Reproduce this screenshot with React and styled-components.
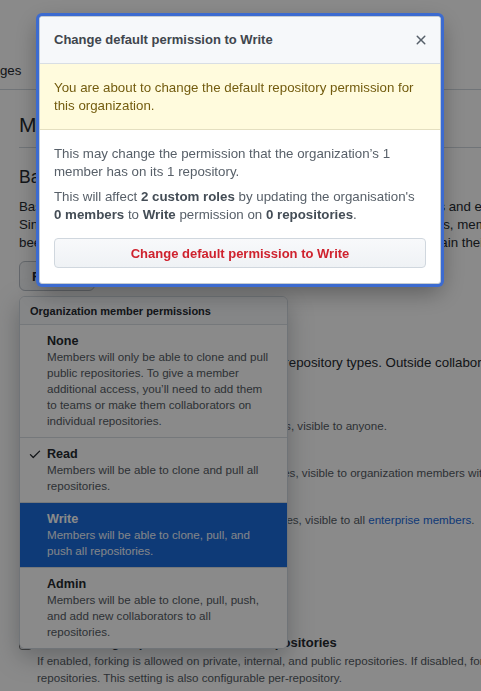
import React from 'react';
import styled, { createGlobalStyle } from 'styled-components';

const GlobalStyle = createGlobalStyle`
  html, body {
    margin: 0;
    padding: 0;
    overflow: hidden;
    background: #ffffff;
  }
  body {
    font-family: "Liberation Sans", Arial, sans-serif;
  }
`;

const permissions = [
  {
    name: 'None',
    text: 'Members will only be able to clone and pull public repositories. To give a member additional access, you\u2019ll need to add them to teams or make them collaborators on individual repositories.',
  },
  { name: 'Read', text: 'Members will be able to clone and pull all repositories.', checked: true },
  { name: 'Write', text: 'Members will be able to clone, pull, and push all repositories.', selected: true },
  { name: 'Admin', text: 'Members will be able to clone, pull, push, and add new collaborators to all repositories.' },
];

const creationOptions = [
  { label: 'Public', before: 'Members will be able to create public repositories, visible to anyone.' },
  {
    label: 'Private',
    before: 'Members will be able to create private repositories, visible to organization members with permission.',
  },
  {
    label: 'Internal',
    before: 'Members will be able to create internal repositories, visible to all ',
    link: 'enterprise members',
    after: '.',
  },
];

function CheckIcon() {
  return (
    <svg width="14" height="14" viewBox="0 0 16 16" fill="currentColor">
      <path d="M13.78 4.22a.75.75 0 0 1 0 1.06l-7.25 7.25a.75.75 0 0 1-1.06 0L2.22 9.28a.751.751 0 0 1 .018-1.042.751.751 0 0 1 1.042-.018L6 10.94l6.72-6.72a.75.75 0 0 1 1.06 0Z" />
    </svg>
  );
}

function XIcon() {
  return (
    <svg width="16" height="16" viewBox="0 0 16 16" fill="currentColor">
      <path d="M3.72 3.72a.75.75 0 0 1 1.06 0L8 6.94l3.22-3.22a.749.749 0 0 1 1.275.326.749.749 0 0 1-.215.734L9.06 8l3.22 3.22a.749.749 0 0 1-.326 1.275.749.749 0 0 1-.734-.215L8 9.06l-3.22 3.22a.751.751 0 0 1-1.042-.018.751.751 0 0 1-.018-1.042L6.94 8 3.72 4.78a.75.75 0 0 1 0-1.06Z" />
    </svg>
  );
}

function Caret() {
  return (
    <svg width="16" height="16" viewBox="0 0 16 16" fill="currentColor">
      <path d="m4.427 7.427 3.396 3.396a.25.25 0 0 0 .354 0l3.396-3.396A.25.25 0 0 0 11.396 7H4.604a.25.25 0 0 0-.177.427Z" />
    </svg>
  );
}

function PermissionMenu() {
  return (
    <Menu>
      <MenuHeader>Organization member permissions</MenuHeader>
      {permissions.map((p) => (
        <MenuItem key={p.name} $selected={p.selected}>
          <CheckSlot>{p.checked && <CheckIcon />}</CheckSlot>
          <ItemBody>
            <ItemTitle>{p.name}</ItemTitle>
            <ItemDesc $selected={p.selected}>{p.text}</ItemDesc>
          </ItemBody>
        </MenuItem>
      ))}
    </Menu>
  );
}

function ConfirmDialog() {
  return (
    <Dialog role="dialog">
      <DialogHeader>
        <DialogTitle>Change default permission to Write</DialogTitle>
        <CloseButton aria-label="Close">
          <XIcon />
        </CloseButton>
      </DialogHeader>
      <Flash>You are about to change the default repository permission for this organization.</Flash>
      <DialogBody>
        <BodyText>This may change the permission that the organization’s 1 member has on its 1 repository.</BodyText>
        <BodyText>
          This will affect <Strong>2 custom roles</Strong> by updating the organisation's{' '}
          <Strong>0 members</Strong> to <Strong>Write</Strong> permission on <Strong>0 repositories</Strong>.
        </BodyText>
        <DangerButton>Change default permission to Write</DangerButton>
      </DialogBody>
    </Dialog>
  );
}

export default function App() {
  return (
    <>
      <GlobalStyle />
      <Page>
        <TopNav>
          <NavItem>Packages</NavItem>
        </TopNav>
        <Main>
          <Subhead>Member privileges</Subhead>
          <SectionTitle>Base permissions</SectionTitle>
          <Para>
            Base permissions to the organization's repositories apply to all members and excludes outside
            collaborators. Since organization members can have permissions from multiple sources, members and
            collaborators who have been granted a higher level of access than the base permissions will retain
            their higher access privileges.
          </Para>
          <MenuWrap>
            <SelectButton>
              Read <Caret />
            </SelectButton>
            <PermissionMenu />
          </MenuWrap>

          <SectionTitle $top={32}>Repository creation</SectionTitle>
          <Para $top={7}>
            Members will be able to create only selected repository types. Outside collaborators cannot.
          </Para>
          <OptionList>
            {creationOptions.map((o) => (
              <OptionRow key={o.label}>
                <Checkbox $checked />
                <OptionBody>
                  <OptionLabel>{o.label}</OptionLabel>
                  <OptionNote>
                    {o.before}
                    {o.link && <Link>{o.link}</Link>}
                    {o.after}
                  </OptionNote>
                </OptionBody>
              </OptionRow>
            ))}
          </OptionList>

          <SectionTitle $top={60}>Repository forking</SectionTitle>
          <ForkOption>
            <Checkbox />
            <OptionBody>
              <OptionLabel>Allow forking of private and internal repositories</OptionLabel>
              <OptionNote>
                If enabled, forking is allowed on private, internal, and public repositories. If disabled, forking
                is only allowed on public repositories. This setting is also configurable per-repository.
              </OptionNote>
            </OptionBody>
          </ForkOption>
        </Main>
        <Backdrop />
        <ConfirmDialog />
      </Page>
    </>
  );
}

const Page = styled.div`
  position: relative;
  width: 100vw;
  height: 100vh;
  overflow: hidden;
  background: #ffffff;
  color: #24292f;
  font-size: 13.3px;
  line-height: 18px;
`;

const TopNav = styled.nav`
  height: 90px;
  box-sizing: border-box;
  display: flex;
  align-items: flex-end;
  padding-bottom: 9px;
  border-bottom: 1px solid #d0d7de;
  width: 720px;
`;

const NavItem = styled.span`
  margin-left: -37px;
`;

const Main = styled.main`
  width: 666px;
  padding-left: 19px;
`;

const Subhead = styled.h2`
  margin: 21px 0 0;
  padding-bottom: 8px;
  font-size: 21px;
  line-height: 28px;
  font-weight: 400;
  border-bottom: 1px solid #d0d7de;
`;

const SectionTitle = styled.h3`
  margin: ${(p) => p.$top || 17}px 0 0;
  font-size: 17.5px;
  line-height: 24px;
  font-weight: 400;
`;

const Para = styled.p`
  margin: ${(p) => p.$top || 9}px 0 0;
`;

const MenuWrap = styled.div`
  position: relative;
  margin-top: 9px;
  width: 269px;
`;

const SelectButton = styled.button`
  display: flex;
  align-items: center;
  gap: 3px;
  height: 30px;
  box-sizing: border-box;
  padding: 0 10px 0 12px;
  border: 1px solid #b9c0c8;
  border-radius: 6px;
  background: #f3f5f7;
  color: #24292f;
  font-family: inherit;
  font-size: 13.3px;
  font-weight: 700;
`;

const Menu = styled.div`
  position: absolute;
  top: calc(100% + 5px);
  left: 0;
  width: 269px;
  box-sizing: border-box;
  background: #ffffff;
  border: 1px solid #d0d7de;
  border-radius: 6px;
  box-shadow: 0 8px 24px rgba(66, 74, 83, 0.35);
  overflow: hidden;
  z-index: 5;
`;

const MenuHeader = styled.div`
  height: 28px;
  box-sizing: border-box;
  display: flex;
  align-items: center;
  padding: 0 10px;
  background: #f6f8fa;
  border-bottom: 1px solid #d8dee4;
  font-size: 11px;
  font-weight: 700;
`;

const MenuItem = styled.div`
  display: flex;
  padding: 8px 16px 8px 8px;
  border-bottom: 1px solid #d8dee4;
  background: ${(p) => (p.$selected ? '#1a6bdc' : '#ffffff')};
  color: ${(p) => (p.$selected ? '#ffffff' : '#24292f')};

  &:last-child {
    border-bottom: 0;
  }
`;

const CheckSlot = styled.div`
  flex: 0 0 19px;
  height: 16px;
  display: flex;
  align-items: center;
`;

const ItemBody = styled.div`
  flex: 1;
`;

const ItemTitle = styled.div`
  font-size: 12.6px;
  line-height: 16px;
  font-weight: 700;
`;

const ItemDesc = styled.div`
  font-size: 11.6px;
  line-height: 16px;
  color: ${(p) => (p.$selected ? '#f0f5fc' : '#545b63')};
`;

const OptionList = styled.div`
  margin-top: 27px;
  display: flex;
  flex-direction: column;
  gap: 12px;
`;

const OptionRow = styled.div`
  display: flex;
  gap: 5px;
`;

const ForkOption = styled(OptionRow)`
  margin-top: 22px;
`;

const Checkbox = styled.span`
  flex: 0 0 13px;
  height: 13px;
  margin-top: 3px;
  box-sizing: border-box;
  border: 1px solid #767676;
  border-radius: 3px;
  background: ${(p) => (p.$checked ? '#0969da' : '#ffffff')};
`;

const OptionBody = styled.div`
  display: flex;
  flex-direction: column;
`;

const OptionLabel = styled.div`
  font-size: 13px;
  font-weight: 700;
  line-height: 18px;
  white-space: nowrap;
`;

const OptionNote = styled.div`
  font-size: 11.6px;
  line-height: 17px;
  color: #545b63;
`;

const Link = styled.span`
  color: #1a6bdc;
`;

const Backdrop = styled.div`
  position: fixed;
  top: 0;
  left: 0;
  width: 100%;
  height: 100%;
  background: rgba(0, 0, 0, 0.46);
  z-index: 10;
`;

const Dialog = styled.div`
  position: fixed;
  top: 16px;
  left: 39px;
  width: 402px;
  box-sizing: border-box;
  background: #ffffff;
  border: 1px solid #c4cbd2;
  border-radius: 3px;
  box-shadow: 0 0 0 3px #3c6bd0, 0 8px 24px rgba(0, 0, 0, 0.35);
  overflow: hidden;
  z-index: 20;
`;

const DialogHeader = styled.div`
  height: 47px;
  box-sizing: border-box;
  display: flex;
  align-items: center;
  justify-content: space-between;
  padding: 0 11px 0 14px;
  background: #f6f8fa;
  border-bottom: 1px solid #d8dee4;
`;

const DialogTitle = styled.h1`
  margin: 0;
  font-size: 13px;
  font-weight: 700;
  color: #40464d;
`;

const CloseButton = styled.button`
  display: flex;
  padding: 0;
  border: 0;
  background: none;
  color: #57606a;
`;

const Flash = styled.div`
  padding: 15px 14px 14px;
  background: #fffbdd;
  border-bottom: 1px solid #e4dfc0;
  color: #735c0f;
`;

const DialogBody = styled.div`
  padding: 15px 14px;
  color: #586069;
`;

const BodyText = styled.p`
  margin: 0 0 7px;
`;

const Strong = styled.strong`
  color: #444d56;
  white-space: nowrap;
`;

const DangerButton = styled.button`
  display: block;
  width: 100%;
  height: 30px;
  margin-top: 14px;
  border: 1px solid #d0d7de;
  border-radius: 4px;
  background: linear-gradient(#f8f9fb, #eff2f5);
  color: #cf222e;
  font-family: inherit;
  font-size: 13px;
  font-weight: 700;
`;
